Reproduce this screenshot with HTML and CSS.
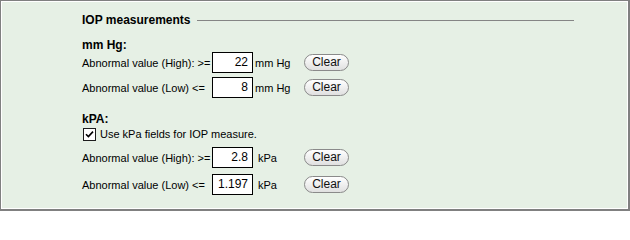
FILE: index.html
```html
<!DOCTYPE html>
<html>
<head>
<meta charset="utf-8">
<link rel="stylesheet" href="styles.css">
</head>
<body>
<div class="panel">
  <div class="title-row">
    <span class="title">IOP measurements</span>
    <span class="rule"></span>
  </div>
  <div class="sub sub-mm">mm Hg:</div>
  <div class="row row1">
    <span class="label">Abnormal value (High): &gt;=</span>
    <span class="field">22</span>
    <span class="unit">mm Hg</span>
    <span class="btn">Clear</span>
  </div>
  <div class="row row2">
    <span class="label">Abnormal value (Low) &lt;=</span>
    <span class="field">8</span>
    <span class="unit">mm Hg</span>
    <span class="btn">Clear</span>
  </div>
  <div class="sub sub-kpa">kPA:</div>
  <div class="check-row">
    <span class="checkbox"><svg width="9" height="9" viewBox="0 0 9 9"><path d="M1 4.2 L3.4 6.6 L8 1.6" fill="none" stroke="#000" stroke-width="1.6"/></svg></span>
    <span class="check-label">Use kPa fields for IOP measure.</span>
  </div>
  <div class="row row3">
    <span class="label">Abnormal value (High): &gt;=</span>
    <span class="field">2.8</span>
    <span class="unit unit-kpa">kPa</span>
    <span class="btn">Clear</span>
  </div>
  <div class="row row4">
    <span class="label">Abnormal value (Low) &lt;=</span>
    <span class="field">1.197</span>
    <span class="unit unit-kpa">kPa</span>
    <span class="btn">Clear</span>
  </div>
</div>
</body>
</html>
```
FILE: styles.css
```css
html, body {
  margin: 0;
  padding: 0;
}
body {
  font-family: "Liberation Sans", Arial, sans-serif;
  font-size: 11px;
  color: #000;
}
.panel {
  width: 630px;
  height: 211px;
  box-sizing: border-box;
  background: #e6f0e5;
  border-style: solid;
  border-color: #808080;
  border-width: 1px 2px 2px 1px;
  box-shadow: inset 1px 1px 0 #ffffff, inset -1px -1px 0 #ffffff;
  padding: 10px 0 0 81px;
  display: flex;
  flex-direction: column;
}
.title-row {
  display: flex;
  align-items: center;
  height: 18px;
}
.title {
  font-weight: bold;
  font-size: 12px;
}
.rule {
  width: 377px;
  height: 1px;
  background: #858585;
  margin-left: auto;
  margin-right: 54px;
}
.sub {
  font-weight: bold;
  font-size: 12px;
  height: 14px;
  line-height: 14px;
}
.sub-mm { margin-top: 9px; }
.sub-kpa { margin-top: 14px; }
.row {
  display: flex;
  align-items: center;
  height: 21px;
}
.row2 { margin-top: 4px; }
.row3 { margin-top: 6px; }
.row4 { margin-top: 6px; }
.label {
  width: 130px;
}
.field {
  width: 41px;
  height: 21px;
  box-sizing: border-box;
  border: 1px solid #000;
  background: #fff;
  text-align: right;
  padding-right: 4px;
  line-height: 19px;
  font-size: 12px;
}
.unit {
  width: 49px;
  padding-left: 2px;
}
.unit-kpa {
  width: 46px;
  padding-left: 5px;
}
.btn {
  width: 45px;
  height: 17px;
  box-sizing: border-box;
  border: 1px solid #8a8a8a;
  border-radius: 9px;
  background: linear-gradient(#ffffff, #e0e0e0);
  text-align: center;
  line-height: 15px;
  font-size: 12px;
  color: #111;
}
.check-row {
  display: flex;
  align-items: center;
  height: 14px;
  margin-top: 1px;
}
.checkbox {
  width: 13px;
  height: 13px;
  box-sizing: border-box;
  border: 1px solid #1c1c1c;
  background: #fff;
  margin-left: 1px;
  display: flex;
  align-items: center;
  justify-content: center;
}
.checkbox svg { display: block; }
.check-label {
  margin-left: 4px;
}
```
